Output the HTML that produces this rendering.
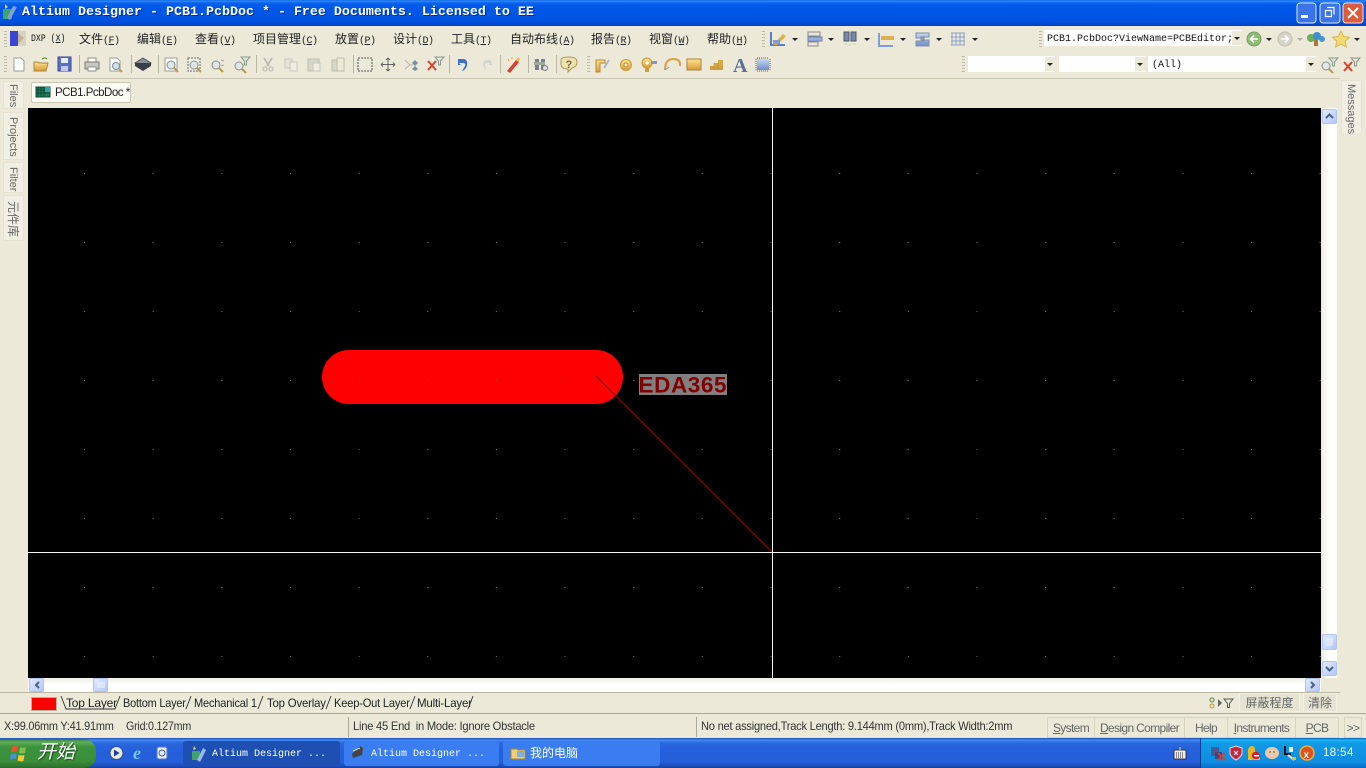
<!DOCTYPE html>
<html><head><meta charset="utf-8"><title>Altium Designer</title>
<style>
html,body{margin:0;padding:0;width:1366px;height:768px;overflow:hidden;background:#ece9d8;font-family:"Liberation Sans","WenQuanYi Zen Hei",sans-serif;font-size:12px;color:#000}
div,span{position:absolute;white-space:nowrap;box-sizing:border-box}
u,b,i{position:static}
svg{position:absolute;left:0;top:0}
#title{left:0;top:0;width:1366px;height:26px;background:linear-gradient(#0a5fe0 0,#2f8cf5 1px,#0a62ee 3px,#0058e8 6px,#0055e5 16px,#0050dc 22px,#0040c4 26px)}
#tt{left:22px;top:5px;font:bold 13.33px/16px "Liberation Mono",monospace;color:#fff;text-shadow:1px 1px 0 #00309c}
.m{top:31px;font:12px/16px "WenQuanYi Zen Hei","Liberation Sans",sans-serif;color:#222}
.m em{font:10px/16px "Liberation Mono",monospace;font-style:normal;letter-spacing:-.5px}
.mono{font:10px/14px "Liberation Mono",monospace;color:#111}
.combo{background:#fff;height:16px}
.st{top:719px;font:12px/14px "Liberation Sans",sans-serif;color:#333;letter-spacing:-.25px;transform-origin:0 0}
.sb{top:717px;height:21px;font:12px/20px "Liberation Sans",sans-serif;color:#666;text-align:center;border:1px solid #d8d4c0;border-left:0;letter-spacing:-.65px}
.vt{writing-mode:vertical-rl;text-orientation:sideways;font:11px/20px "Liberation Sans","WenQuanYi Zen Hei",sans-serif;color:#666;background:#f1efe4;border:1px solid #e6e3d4}
.sbtn{background:linear-gradient(135deg,#e1eafe,#b4c8f6);border:1px solid #b0c4ee;border-radius:2px;width:15px;height:15px}
.tk{top:741px;height:25px;border-radius:3px;font:10px/27px "Liberation Mono",monospace;color:#fff}
.lt{top:696px;font:12px/14px "Liberation Sans",sans-serif;color:#222;letter-spacing:-.2px;transform-origin:0 0}
.bt{top:693px;height:19px;background:#e6e3d2;border:1px solid #f2f0e5;text-align:center;color:#666;font:12px/18px "WenQuanYi Zen Hei",sans-serif}
</style></head><body>
<div id="title"></div>
<div id="tt">Altium Designer - PCB1.PcbDoc * - Free Documents. Licensed to EE</div>

<!-- Menu -->
<div class="mono" style="left:31px;top:33px;transform:scaleX(.82);transform-origin:0 0">DXP (<u>X</u>)</div>
<div class="m" style="left:79px">文件<em>(<u>F</u>)</em></div>
<div class="m" style="left:137px">编辑<em>(<u>E</u>)</em></div>
<div class="m" style="left:195px">查看<em>(<u>V</u>)</em></div>
<div class="m" style="left:253px">项目管理<em>(<u>C</u>)</em></div>
<div class="m" style="left:335px">放置<em>(<u>P</u>)</em></div>
<div class="m" style="left:393px">设计<em>(<u>D</u>)</em></div>
<div class="m" style="left:451px">工具<em>(<u>T</u>)</em></div>
<div class="m" style="left:510px">自动布线<em>(<u>A</u>)</em></div>
<div class="m" style="left:591px">报告<em>(<u>R</u>)</em></div>
<div class="m" style="left:649px">视窗<em>(<u>W</u>)</em></div>
<div class="m" style="left:707px">帮助<em>(<u>H</u>)</em></div>

<div class="combo" style="left:1044px;top:30px;width:198px"></div>
<div class="mono" style="left:1047px;top:33px">PCB1.PcbDoc?ViewName=PCBEditor;</div>
<div class="combo" style="left:968px;top:56px;width:87px"></div>
<div class="combo" style="left:1059px;top:56px;width:86px"></div>
<div class="combo" style="left:1148px;top:56px;width:168px"></div>
<div class="mono" style="left:1152px;top:59px">(All)</div>
<div style="left:1045px;top:57px;width:10px;height:14px;background:#ece9d8"></div>
<div style="left:1135px;top:57px;width:10px;height:14px;background:#ece9d8"></div>
<div style="left:1306px;top:57px;width:10px;height:14px;background:#ece9d8"></div>
<div style="left:1232px;top:31px;width:10px;height:14px;background:#ece9d8"></div>

<div style="left:0;top:78px;width:1340px;height:1px;background:#c8c5b2"></div>

<!-- Document tab -->
<div style="left:31px;top:82px;width:100px;height:21px;background:#fbfbf3;border:1px solid #c9c6b4;border-radius:2px"></div>
<div style="left:55px;top:86px;font:11.5px/14px 'Liberation Sans',sans-serif;color:#222;letter-spacing:-.5px">PCB1.PcbDoc *</div>

<!-- Side tabs -->
<div class="vt" style="left:3px;top:81px;width:21px;height:28px;padding-top:2px">Files</div>
<div class="vt" style="left:3px;top:112px;width:21px;height:48px;padding-top:4px">Projects</div>
<div class="vt" style="left:3px;top:162px;width:21px;height:31px;padding-top:4px">Filter</div>
<div class="vt" style="left:3px;top:195px;width:21px;height:46px;padding-top:5px;font-size:12px">元件库</div>
<div class="vt" style="left:1341px;top:80px;width:21px;height:55px;padding-top:3px">Messages</div>

<!-- Canvas -->
<svg width="1366" height="768" style="z-index:1">
<defs><pattern id="g" x="84" y="173" width="68.65" height="69" patternUnits="userSpaceOnUse"><rect width="1" height="1" fill="#6a6a6a"/></pattern></defs>
<rect x="28" y="108" width="1293" height="570" fill="#000"/>
<rect x="28" y="108" width="1293" height="570" fill="url(#g)"/>
<rect x="322" y="350" width="301" height="54" rx="27" fill="#ff0000"/>
<rect x="28" y="108" width="1293" height="570" fill="url(#g)" opacity=".5"/>
<line x1="596" y1="376" x2="772" y2="552" stroke="#8c0505" stroke-width="1"/>
<rect x="639" y="374" width="88" height="21" fill="#808080"/>
<text x="638.5" y="392.5" font-family="Liberation Sans" font-weight="bold" font-size="22.5" fill="#800000" textLength="88">EDA365</text>
<rect x="772" y="108" width="1" height="570" fill="#f4f4f4"/>
<rect x="28" y="552" width="1293" height="1" fill="#f4f4f4"/>
</svg>

<!-- Scrollbars -->
<div style="left:28px;top:678px;width:1293px;height:14px;background:linear-gradient(#f0efe6,#fff 50%,#fdfdfa)"></div>
<div style="left:1322px;top:108px;width:15px;height:570px;background:linear-gradient(90deg,#f0efe6,#fff 50%,#fdfdfa)"></div>
<div class="sbtn" style="left:29px;top:678px;height:14px"></div>
<div class="sbtn" style="left:93px;top:678px;height:14px"></div>
<div class="sbtn" style="left:1305px;top:678px;height:14px"></div>
<div class="sbtn" style="left:1322px;top:109px"></div>
<div class="sbtn" style="left:1322px;top:634px;height:16px"></div>
<div class="sbtn" style="left:1322px;top:661px"></div>

<!-- Layer tabs -->
<div style="left:0;top:692px;width:1340px;height:1px;background:#b9b6a3"></div>
<div style="left:0;top:713px;width:1366px;height:1px;background:#aca899"></div>
<div style="left:31px;top:697px;width:26px;height:14px;background:#f00;border:1px solid #b8b4a0"></div>
<div class="lt" style="left:66px">Top Layer</div>
<div class="lt" style="left:123px;transform:scaleX(.91)">Bottom Layer</div>
<div class="lt" style="left:194px;transform:scaleX(.92)">Mechanical 1</div>
<div class="lt" style="left:267px;transform:scaleX(.95)">Top Overlay</div>
<div class="lt" style="left:334px;transform:scaleX(.925)">Keep-Out Layer</div>
<div class="lt" style="left:417px;transform:scaleX(.96)">Multi-Layer</div>
<div class="bt" style="left:1239px;width:61px">屏蔽程度</div>
<div class="bt" style="left:1303px;width:34px">清除</div>

<!-- Status -->
<div class="st" style="left:4px;transform:scaleX(.91)">X:99.06mm Y:41.91mm</div>
<div class="st" style="left:126px;transform:scaleX(.89)">Grid:0.127mm</div>
<div style="left:348px;top:717px;width:1px;height:20px;background:#aca899"></div>
<div class="st" style="left:353px;transform:scaleX(.93)">Line 45 End&nbsp; in Mode: Ignore Obstacle</div>
<div style="left:696px;top:717px;width:1px;height:20px;background:#aca899"></div>
<div class="st" style="left:701px;transform:scaleX(.925)">No net assigned,Track Length: 9.144mm (0mm),Track Width:2mm</div>
<div class="sb" style="left:1047px;width:48px;border-left:1px solid #d8d4c0"><u>S</u>ystem</div>
<div class="sb" style="left:1095px;width:90px"><u>D</u>esign Compiler</div>
<div class="sb" style="left:1185px;width:43px">Help</div>
<div class="sb" style="left:1228px;width:68px"><u>I</u>nstruments</div>
<div class="sb" style="left:1296px;width:43px"><u>P</u>CB</div>
<div class="sb" style="left:1344px;width:18px;border-left:1px solid #d8d4c0">&gt;&gt;</div>

<!-- Taskbar -->
<div style="left:0;top:738px;width:1366px;height:30px;background:linear-gradient(#1c48b0 0,#3f8cf3 2px,#2a66dd 5px,#245edb 15px,#2560da 24px,#1941a5 30px)"></div>
<div style="left:1200px;top:738px;width:166px;height:30px;background:linear-gradient(#0c59b9 0,#18b9f1 2px,#109ae6 5px,#0f8de0 24px,#0a6cc8 30px);border-left:1px solid #0a3f9c"></div>
<div style="left:0;top:739px;width:96px;height:29px;background:linear-gradient(#2f7a2f 0,#5fae5c 3px,#3c933c 8px,#3a8e3a 22px,#2a6e2a 29px);border-radius:0 12px 12px 0"></div>
<div style="left:37px;top:740px;font:italic 19px/26px 'WenQuanYi Zen Hei',sans-serif;color:#fff;text-shadow:1px 1px 1px #1c4c1c">开始</div>
<div class="tk" style="left:183px;width:157px;background:#1e50b4"></div>
<div class="tk" style="left:344px;width:155px;background:#3a7df0"></div>
<div class="tk" style="left:503px;width:157px;background:#3a7df0"></div>
<div class="tk" style="left:212px">Altium Designer ...</div>
<div class="tk" style="left:371px">Altium Designer ...</div>
<div class="tk" style="left:530px;font:12px/24px 'WenQuanYi Zen Hei',sans-serif">我的电脑</div>
<div style="left:1323px;top:746px;font:11.5px/14px 'Liberation Sans',sans-serif;letter-spacing:.4px;color:#fff">18:54</div>

<!-- Icons overlay -->
<svg width="1366" height="768" style="z-index:2" fill="none">
<defs>
<linearGradient id="gy" x1="0" y1="0" x2="0" y2="1"><stop offset="0" stop-color="#ffe58c"/><stop offset="1" stop-color="#d79a38"/></linearGradient>
<linearGradient id="bl" x1="0" y1="0" x2="0" y2="1"><stop offset="0" stop-color="#c7d6f3"/><stop offset="1" stop-color="#6f8fc8"/></linearGradient>
<g id="grip"><rect x="0" y="0" width="3" height="1" fill="#bdbaa6"/><rect x="0" y="3" width="3" height="1" fill="#bdbaa6"/><rect x="0" y="6" width="3" height="1" fill="#bdbaa6"/><rect x="0" y="9" width="3" height="1" fill="#bdbaa6"/><rect x="0" y="12" width="3" height="1" fill="#bdbaa6"/><rect x="0" y="15" width="3" height="1" fill="#bdbaa6"/></g>
<path id="dd" d="M0 0h6l-3 3z" fill="#222"/>
<g id="mag"><circle cx="5" cy="5" r="4" fill="#dfe8e6" stroke="#8a8f88"/><path d="M8 8l4 4" stroke="#b89a50" stroke-width="2"/></g>
<g id="fun"><path d="M0 0h9l-3.5 4v4h-2V4z" fill="#e4e4d8" stroke="#8a9a8e"/></g>
</defs>

<!-- window buttons -->
<g>
<rect x="1297" y="3" width="19" height="20" rx="3" fill="#3c74e8" stroke="#dce6fb"/><rect x="1301" y="15" width="7" height="3" fill="#fff"/>
<rect x="1320" y="3" width="20" height="20" rx="3" fill="#3c74e8" stroke="#dce6fb"/><path d="M1327 7.5h7v7M1325.5 10.5h6v6h-6z" stroke="#fff" stroke-width="1.2"/>
<rect x="1343" y="3" width="20" height="20" rx="3" fill="#dc5b3c" stroke="#f6e2dc"/><path d="M1348 8l10 10M1358 8l-10 10" stroke="#fff" stroke-width="2"/>
</g>
<!-- title icon -->
<g transform="translate(2,3)"><rect x="1" y="6" width="9" height="10" fill="#3fa36a"/><path d="M11 3L5 15l3 2 7-13z" fill="#7fa0d8"/><path d="M3 1l3 3-3 2z" fill="#e8d24a"/></g>

<!-- grips -->
<use href="#grip" x="4" y="31"/><use href="#grip" x="4" y="56"/>
<use href="#grip" x="762" y="31"/><use href="#grip" x="1039" y="31"/><use href="#grip" x="587" y="56"/><use href="#grip" x="962" y="56"/>
<!-- separators -->
<g fill="#b9b6a2"><rect x="79" y="55" width="1" height="18"/><rect x="131" y="55" width="1" height="18"/><rect x="158" y="55" width="1" height="18"/><rect x="256" y="55" width="1" height="18"/><rect x="353" y="55" width="1" height="18"/><rect x="449" y="55" width="1" height="18"/><rect x="500" y="55" width="1" height="18"/><rect x="528" y="55" width="1" height="18"/><rect x="556" y="55" width="1" height="18"/></g>

<!-- DXP -->
<rect x="10" y="31" width="8" height="15" fill="#3a45d2"/><path d="M18 33l6 5-6 6z" fill="#c9b98f"/><rect x="18" y="31" width="8" height="15" fill="#b5ad94" opacity=".35"/>

<!-- Row 2 -->
<path d="M14 58h7l3 3v10H14z" fill="#fff" stroke="#9a9c92"/>
<path d="M34 62h4l1 1h9l-2 8H34z" fill="url(#gy)" stroke="#a88640"/><path d="M42 59q3-2 5 0" stroke="#5a8a3a"/>
<rect x="58" y="57" width="13" height="14" fill="#5a70c4" stroke="#3a4c98"/><rect x="61" y="58" width="7" height="5" fill="#e8ecf8"/><rect x="61" y="66" width="7" height="5" fill="#bfc8e4"/>
<path d="M88 58h8v4h-8z" fill="#fff" stroke="#909088"/><rect x="85" y="62" width="14" height="7" fill="#c8c8c0" stroke="#7c7c74"/><rect x="88" y="67" width="8" height="4" fill="#fff" stroke="#909088"/>
<path d="M110 58h7l3 3v10h-10z" fill="#fff" stroke="#9a9c92"/><circle cx="116" cy="66" r="3.5" fill="#cfe0ec" stroke="#7f8f94"/><path d="M119 69l3 3" stroke="#b89a50" stroke-width="2"/>
<path d="M143 58l8 5-8 5-8-5z" fill="#8b8f96" stroke="#50545a"/><path d="M135 63v3l8 5 8-5v-3" fill="#3a3e48"/>
<rect x="165" y="58" width="12" height="13" fill="#fff" stroke="#9a9c92"/><use href="#mag" x="166" y="60"/>
<rect x="188" y="58" width="12" height="13" fill="#f4f2e6" stroke="#666" stroke-dasharray="2 1"/><use href="#mag" x="189" y="60"/>
<use href="#mag" x="211" y="60"/><path d="M221 60l3 1M221 66l3-1" stroke="#aaa"/>
<use href="#mag" x="234" y="61"/><use href="#fun" x="241" y="57"/>
<!-- disabled edits -->
<path d="M264 58l5 8M272 58l-5 8" stroke="#b4b4aa" stroke-width="1.6"/><circle cx="265" cy="69" r="2" stroke="#b4b4aa"/><circle cx="271" cy="69" r="2" stroke="#b4b4aa"/>
<rect x="285" y="59" width="7" height="9" fill="#e6e4d8" stroke="#c8c6b8"/><rect x="290" y="62" width="7" height="9" fill="#f0eee4" stroke="#c8c6b8"/>
<rect x="308" y="59" width="11" height="12" fill="#d8d6c8" stroke="#c0bea8"/><rect x="313" y="63" width="7" height="8" fill="#f0eee4" stroke="#c8c6b8"/>
<rect x="332" y="60" width="10" height="11" fill="#d8d6c8" stroke="#c0bea8"/><rect x="337" y="58" width="7" height="13" fill="#ecead8" stroke="#c0bea8"/>
<rect x="358" y="58" width="14" height="13" stroke="#555" stroke-dasharray="2 1"/>
<path d="M388 58v13M381 64.5h14M388 58l-2 2M388 58l2 2M388 71l-2-2M388 71l2-2M381 64.5l2-2M381 64.5l2 2M395 64.5l-2-2M395 64.5l-2 2" stroke="#666"/>
<path d="M405 60l5 5-5 4M410 65h3" stroke="#b8b8a8"/><path d="M415 60l3 3 -3 3-3-3z" fill="#7a8ea0"/><path d="M415 66l3 3-3 2-3-2z" fill="#7a8ea0"/>
<path d="M428 61l8 9M436 61l-8 9" stroke="#d8422e" stroke-width="2"/><use href="#fun" x="435" y="57"/>
<path d="M458 59h6q4 1 3 6t-5 6l3-5q1-3-2-3h-4l2 2h-3z" fill="#3f70c4"/>
<path d="M491 60h-5q-3 1-3 4t3 6l-1-5q0-2 2-2h3l-1 2h3z" fill="#d4d4c8"/>
<path d="M507 71l9-11 3 2-9 11z" fill="#d84030"/><path d="M516 59l3-2 1 3-2 2z" fill="#f0c040"/><path d="M508 59l1 2M512 57v2" stroke="#e8a030"/>
<rect x="535" y="59" width="4" height="11" fill="#7a8090"/><rect x="541" y="59" width="4" height="11" fill="#7a8090"/><rect x="534" y="62" width="11" height="3" fill="#a4a89c"/><circle cx="545" cy="68" r="2.5" fill="#dde" stroke="#777"/>
<path d="M561 60q0-3 8-3t8 5-5 6l-4 4v-3q-7 0-7-5z" fill="#f0e2ae" stroke="#a89860"/><text x="565.5" y="68" font-family="Liberation Sans" font-weight="bold" font-size="11" fill="#7a6a40">?</text>
<path d="M596 72V60h9v3h-5v9z" fill="url(#gy)" stroke="#b08a40"/><path d="M604 68l5-8" stroke="#a8b8c8" stroke-width="2"/>
<circle cx="626" cy="65" r="5.5" fill="url(#gy)" stroke="#c89a3c"/><circle cx="626" cy="65" r="2" fill="#f4eccc" stroke="#b88a34"/>
<circle cx="647" cy="63" r="5" fill="url(#gy)" stroke="#c89a3c"/><circle cx="647" cy="63" r="1.6" fill="#fff"/><rect x="645" y="67" width="4" height="5" fill="#d89a38"/><rect x="651" y="61" width="6" height="3" fill="#7f98b8"/>
<path d="M665 70q0-11 8-11t7 7" stroke="#d8a040" stroke-width="2"/><path d="M665 70l4-3" stroke="#8a9ab0"/>
<rect x="687" y="59" width="14" height="11" fill="url(#gy)" stroke="#a88640"/>
<path d="M710 70v-4h4v-3h4v-3h5v10z" fill="#d8a848"/><path d="M710 67h13M710 69h13M714 63v7M718 63v7" stroke="#b8892e" stroke-width=".6"/>
<text x="733" y="72" font-family="Liberation Serif" font-weight="bold" font-size="20" fill="#5a6f94">A</text>
<rect x="757" y="59" width="12" height="11" fill="url(#bl)"/><path d="M757 58h12M757 71h12M756 59v11M770 59v11" stroke="#555" stroke-dasharray="1 1"/>

<!-- Row 1 right tools -->
<path d="M771 32v13h14" stroke="#5a80c0" stroke-width="2"/><path d="M773 45l10-11 3 2-9 9z" fill="#e0b040"/><rect x="773" y="40" width="7" height="4" fill="#7f9ed8"/>
<use href="#dd" x="792" y="38"/>
<rect x="808" y="32" width="12" height="4" fill="#e8e8e0" stroke="#8a8a80"/><rect x="808" y="37" width="14" height="4" fill="#98aedc" stroke="#6f85b4"/><rect x="808" y="42" width="10" height="4" fill="#e8e8e0" stroke="#8a8a80"/>
<use href="#dd" x="828" y="38"/>
<rect x="844" y="32" width="5" height="9" fill="#7a88a8" stroke="#4c5870"/><rect x="851" y="32" width="5" height="9" fill="#7a88a8" stroke="#4c5870"/><path d="M845 44h2M849 45h2M853 44h2" stroke="#c8c8a0"/>
<use href="#dd" x="864" y="38"/>
<path d="M879 33v13h14" stroke="#7f9ed8" stroke-width="2"/><rect x="881" y="36" width="13" height="4" fill="#e0b050"/>
<use href="#dd" x="900" y="38"/>
<path d="M916 33h13v4h-8v3h8v6h-13v-5h8v-3h-8z" fill="url(#bl)" stroke="#7f8fa8"/>
<use href="#dd" x="936" y="38"/>
<path d="M952 33v12M956 33v12M960 33v12M964 33v12M951 33h14M951 37h14M951 41h14M951 45h14" stroke="#8a9ec8"/>
<use href="#dd" x="972" y="38"/>

<!-- nav -->
<circle cx="1254" cy="39" r="7" fill="#8cc070" stroke="#7a9a6a"/><path d="M1258 39h-7M1254 35.5l-3.5 3.5 3.5 3.5" stroke="#fff" stroke-width="1.6"/>
<use href="#dd" x="1266" y="38"/>
<circle cx="1285" cy="39" r="7" fill="#d6d5c8" stroke="#c0bfb0"/><path d="M1281 39h7M1285 35.5l3.5 3.5-3.5 3.5" stroke="#fff" stroke-width="1.6"/>
<path d="M1297 38h6l-3 3z" fill="#aaa"/>
<rect x="1314" y="38" width="4" height="8" fill="#a87838"/><ellipse cx="1311" cy="38" rx="4" ry="4" fill="#6cae5c"/><ellipse cx="1317" cy="36" rx="4" ry="4" fill="#3f8fcc"/><ellipse cx="1322" cy="39" rx="3" ry="3" fill="#4a96d4"/>
<path d="M1341 31l2.6 5.5 6 .7-4.4 4 1.2 5.8-5.4-3-5.4 3 1.2-5.8-4.4-4 6-.7z" fill="#f4dc70" stroke="#d8b850"/>
<use href="#dd" x="1354" y="38"/>
<!-- combo arrows -->
<use href="#dd" x="1234" y="37"/><use href="#dd" x="1047" y="63"/><use href="#dd" x="1137" y="63"/><use href="#dd" x="1308" y="63"/>
<use href="#mag" x="1321" y="61"/><use href="#fun" x="1329" y="58"/>
<path d="M1344 62l8 9M1352 62l-8 9" stroke="#d8422e" stroke-width="2"/><use href="#fun" x="1351" y="58"/>

<!-- doc icon -->
<rect x="36" y="87" width="14" height="10" fill="#1f7a5c" stroke="#134a38"/><path d="M38 87v10M41 87v10M44 87v10M36 90h14M36 93h14" stroke="#0e3a2a" stroke-width=".7"/><rect x="45" y="87" width="5" height="5" fill="#2fa6a0"/>

<!-- Scroll arrows -->
<path d="M39 682l-3 3 3 3" stroke="#4d6185" stroke-width="2"/>
<path d="M1311 682l3 3-3 3" stroke="#4d6185" stroke-width="2"/>
<path d="M1326 118l3.5-3.5 3.5 3.5" stroke="#4d6185" stroke-width="2"/>
<path d="M1326 667l3.5 3.5 3.5-3.5" stroke="#4d6185" stroke-width="2"/>
<path d="M98 682v6M100 682v6M102 682v6M104 682v6" stroke="#eef3fd"/>
<path d="M1326 639h7M1326 641h7M1326 643h7M1326 645h7" stroke="#eef3fd"/>

<!-- Layer tab slashes -->
<path d="M61 696l5 13h49l5-13M186 709l5-13M258 709l5-13M326 709l5-13M410 709l5-13M468 709l5-13" stroke="#333" stroke-width=".9"/>
<!-- Layer filter -->
<circle cx="1212" cy="700" r="2" stroke="#5a8a3a"/><circle cx="1212" cy="706" r="2" stroke="#b09838"/>
<path d="M1218 699l4 4-4 4z" fill="#666"/>
<path d="M1224 699h9l-3.5 4.5v4h-2v-4z" stroke="#555"/>

<!-- Start flag -->
<g transform="translate(11,744)"><path d="M1 3q3-2 6-.5L6 8q-3-1-6 .5z" fill="#e8562c"/><path d="M9 3q3 1.5 6 0l-1 6q-3 1-6 0z" fill="#7cc04c"/><path d="M0 10q3-1 5.500 0L5 15q-3-1-6 .5z" fill="#4a90e0"/><path d="M7.500 11q3 1 6 0l-1 6q-3 1-6-.5z" fill="#f4c838"/></g>
<!-- Quick launch -->
<circle cx="116.500" cy="753" r="6.500" fill="#e8e8e0" stroke="#2a4a8c"/><path d="M114 749.500l5.500 3.500-5.500 3.500z" fill="#1f3f8c"/>
<text x="133" y="759" font-family="Liberation Serif" font-style="italic" font-weight="bold" font-size="18" fill="#7ac4f4">e</text>
<rect x="157" y="747" width="10" height="12" rx="2" fill="#e8eef8" stroke="#5a7ab8"/><circle cx="162" cy="753" r="3" stroke="#3a5fa8"/>
<!-- Task icons -->
<g transform="translate(191,746)"><rect x="1" y="5" width="8" height="9" fill="#3fa36a"/><path d="M12 2L6 14l3 2 6-12z" fill="#9ab8e8"/><path d="M3 0l2 3-3 1z" fill="#e8d24a"/></g>
<path d="M360 746l3 2-1 7-9 3-1-4z" fill="#444"/><path d="M353 751l7-3" stroke="#ddd"/>
<path d="M511 749h6l1 1h7v9h-14z" fill="#f0d070" stroke="#a88640"/><rect x="517" y="751" width="7" height="6" fill="#7fb0e0"/>
<!-- Tray -->
<rect x="1174" y="750" width="12" height="9" fill="#f0f0e8" stroke="#334"/><path d="M1176 753h8M1176 755h8M1176 757h8" stroke="#223" stroke-dasharray="1 1"/><path d="M1180 750v-3" stroke="#ddd"/>
<rect x="1211" y="747" width="8" height="9" fill="#4a5a90"/><rect x="1215" y="752" width="7" height="7" fill="#3a4a80"/><path d="M1218 753l7 7M1225 753l-7 7" stroke="#e03c30" stroke-width="1.6"/>
<path d="M1236 746l6 2v6q-2 4-6 6-4-2-6-6v-6z" fill="#c8243c" stroke="#e8d8d8"/><path d="M1234 751l4 4M1238 751l-4 4" stroke="#fff"/>
<path d="M1248 760v-10q1-4 4-4t3 4v3h5v7z" fill="#e8b820"/><rect x="1252" y="752" width="8" height="7" rx="3" fill="#cc2030"/><rect x="1254" y="755" width="5" height="1.500" fill="#fff"/>
<ellipse cx="1272" cy="753" rx="7" ry="6" fill="#ecc8a8"/><circle cx="1270" cy="752" r="1" fill="#885"/><circle cx="1274" cy="752" r="1" fill="#885"/>
<path d="M1285 746v8h6" stroke="#111" stroke-width="2"/><rect x="1289" y="747" width="4" height="5" fill="#eee"/><path d="M1288 755l6 5" stroke="#e8e8d0" stroke-width="2"/><rect x="1292" y="757" width="4" height="3" fill="#d8c030"/>
<circle cx="1307" cy="753" r="7" fill="#e05020" stroke="#f0b030" stroke-width="1.500"/><text x="1303.500" y="758" font-family="Liberation Sans" font-weight="bold" font-size="10" fill="#fff">x</text>
</svg>
</body></html>
